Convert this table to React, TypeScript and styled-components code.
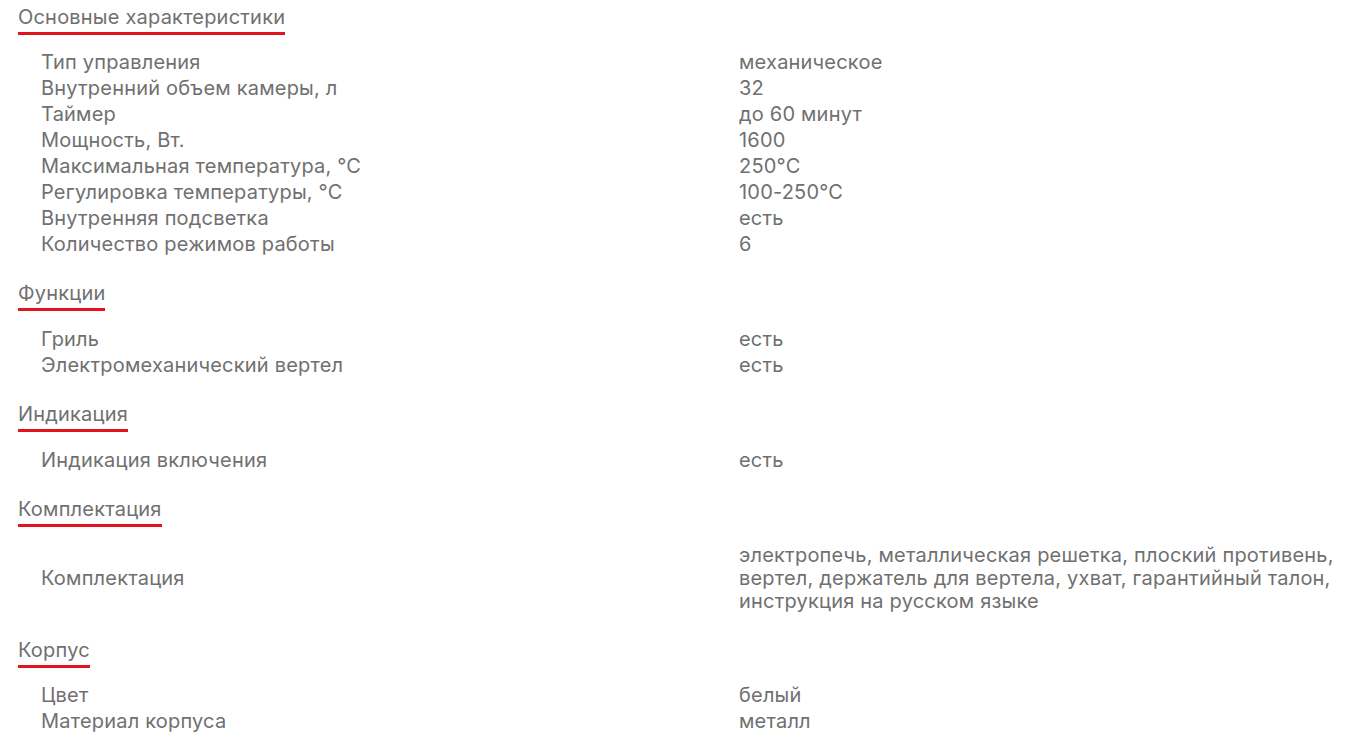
import React from "react";
import styled, { createGlobalStyle } from "styled-components";

const GlobalStyle = createGlobalStyle`
  body {
    margin: 0;
    background: #ffffff;
    font-family: Inter, "Noto Sans", sans-serif;
  }
`;

type Row = [string, string];
type Group = { title: string; rows: Row[] };

const groups: Group[] = [
  {
    title: "Основные характеристики",
    rows: [
      ["Тип управления", "механическое"],
      ["Внутренний объем камеры, л", "32"],
      ["Таймер", "до 60 минут"],
      ["Мощность, Вт.", "1600"],
      ["Максимальная температура, °С", "250°С"],
      ["Регулировка температуры, °С", "100-250°С"],
      ["Внутренняя подсветка", "есть"],
      ["Количество режимов работы", "6"],
    ],
  },
  {
    title: "Функции",
    rows: [
      ["Гриль", "есть"],
      ["Электромеханический вертел", "есть"],
    ],
  },
  {
    title: "Индикация",
    rows: [["Индикация включения", "есть"]],
  },
  {
    title: "Комплектация",
    rows: [
      [
        "Комплектация",
        "электропечь, металлическая решетка, плоский противень, вертел, держатель для вертела, ухват, гарантийный талон, инструкция на русском языке",
      ],
    ],
  },
  {
    title: "Корпус",
    rows: [
      ["Цвет", "белый"],
      ["Материал корпуса", "металл"],
    ],
  },
];

export default function App() {
  return (
    <>
      <GlobalStyle />
      <Specs>
        {groups.map((g) => (
          <Section key={g.title}>
            <Heading>{g.title}</Heading>
            <Table>
              {g.rows.map(([name, value]) => (
                <Line key={name}>
                  <Name>{name}</Name>
                  <Value>{value}</Value>
                </Line>
              ))}
            </Table>
          </Section>
        ))}
      </Specs>
    </>
  );
}

const Specs = styled.div`
  padding: 5.5px 6px 0 18px;
  color: #707070;
  font-size: 20px;
  letter-spacing: 0.2px;
  display: flex;
  flex-direction: column;
  gap: 24.5px;
`;

const Section = styled.section`
  display: flex;
  flex-direction: column;
  align-items: flex-start;
`;

const Heading = styled.h3`
  margin: 0;
  font-size: 20px;
  font-weight: 400;
  line-height: 23px;
  padding-bottom: 3px;
  border-bottom: 3px solid #e0141c;
`;

const Table = styled.div`
  margin-top: 15.3px;
  align-self: stretch;
  display: flex;
  flex-direction: column;
`;

const Line = styled.div`
  display: grid;
  grid-template-columns: 698px 1fr;
  align-items: center;
  padding: 1.5px 0 1.5px 23px;
  line-height: 23px;
`;

const Name = styled.div``;

const Value = styled.div``;
